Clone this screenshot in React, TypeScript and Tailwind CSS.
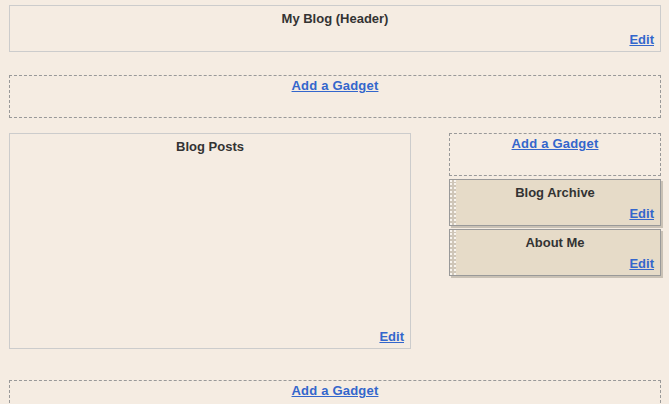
const font = "font-['Liberation_Sans',Arial,sans-serif]"

function EditLink() {
  return (
    <div className="flex justify-end pr-[6px]">
      <a href="#" className="text-[13px] font-bold leading-[15px] text-[#3366cc] underline">
        Edit
      </a>
    </div>
  )
}

function AddGadget({ className = '' }: { className?: string }) {
  return (
    <div
      className={`h-[43px] border border-dashed border-[#999] pt-[2px] text-center text-[13px] leading-[15px] tracking-[0.2px] ${className}`}
    >
      <a href="#" className="font-bold text-[#3366cc] underline">
        Add a Gadget
      </a>
    </div>
  )
}

function Gadget({ title, className = '' }: { title: string; className?: string }) {
  return (
    <div
      className={`relative flex h-[47px] flex-col border border-[#999] bg-[#e6dbc8] shadow-[2px_2px_0_#c9c1b5] ${className}`}
    >
      {/* drag grip */}
      <div className="absolute inset-y-0 left-0 w-[6px] border-x-2 border-dotted border-[#f8f4ee] bg-[#cfc6b8]" />
      <div className="pt-[5px] text-center text-[13px] font-bold leading-[15px] text-[#333]">{title}</div>
      <div className="flex-1" />
      <div className="pb-[4px]">
        <EditLink />
      </div>
    </div>
  )
}

export default function App() {
  return (
    <div className={`h-[404px] w-[669px] overflow-hidden bg-[#f5ece2] pl-[9px] pr-[8px] pt-[5px] ${font}`}>
      <div className="flex h-[47px] flex-col border border-[#ccc]">
        <div className="pt-[5px] text-center text-[13px] font-bold leading-[15px] text-[#333]">My Blog (Header)</div>
        <div className="flex-1" />
        <div className="pb-[4px]">
          <EditLink />
        </div>
      </div>

      <AddGadget className="mt-[23px]" />

      <div className="mt-[15px] flex">
        <div className="flex h-[216px] w-[402px] flex-col border border-[#ccc]">
          <div className="pt-[5px] text-center text-[13px] font-bold leading-[15px] text-[#333]">Blog Posts</div>
          <div className="flex-1" />
          <div className="pb-[4px]">
            <EditLink />
          </div>
        </div>
        <div className="ml-[38px] flex w-[212px] flex-col">
          <AddGadget />
          <Gadget title="Blog Archive" className="mt-[3px]" />
          <Gadget title="About Me" className="mt-[3px]" />
        </div>
      </div>

      <AddGadget className="mt-[31px]" />
    </div>
  )
}
